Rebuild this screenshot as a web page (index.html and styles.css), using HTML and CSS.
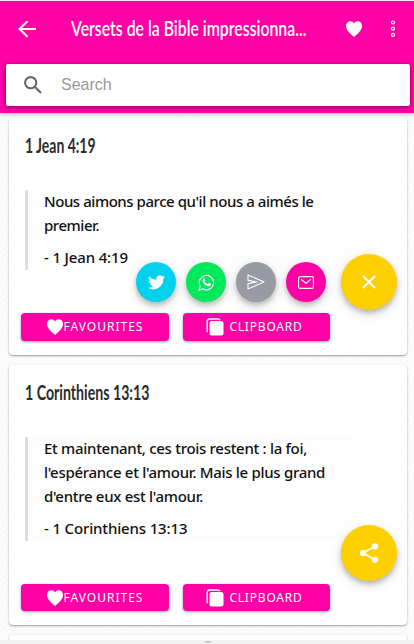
FILE: index.html
```html
<!DOCTYPE html>
<html lang="fr">
<head>
    <meta charset="UTF-8">
    <meta name="viewport" content="width=device-width, initial-scale=1.0">
    <title>Versets de la Bible</title>
    <link rel="stylesheet" href="styles.css">
</head>
<body>
    <!-- Shared icons -->
    <svg class="icon-defs" width="0" height="0">
        <symbol id="heart" viewBox="0 0 16 16">
            <path fill="currentColor" d="M8 16C6.8 14.8 4.2 13 2.3 10.6 .8 8.8 0 7 0 5 0 2.1 1.9.3 4.4.3 6 .3 7.3 1.1 8 2.5 8.7 1.1 10 .3 11.6.3 14.1.3 16 2.1 16 5c0 2-.8 3.800-2.300 5.600C11.800 13 9.200 14.800 8 16z"/>
        </symbol>
        <symbol id="copy" viewBox="0 0 18 18">
            <path fill="none" stroke="currentColor" stroke-width="1.500" d="M1.200 14.200V3.600Q1.200 1 3.800 1H11.500Q13.400 1 14 2.200"/>
            <rect fill="currentColor" x="3.500" y="3" width="14" height="14.500" rx="2.500"/>
        </symbol>
    </svg>

    <header>
        <div class="toolbar">
            <a href="#" class="back">
                <svg width="18" height="18" viewBox="0 0 18 18"><path fill="none" stroke="#fff" stroke-width="2" d="M18 9H2M9.500 1.200L1.500 9l8 7.800"/></svg>
            </a>
            <h1><span>Versets de la Bible impressionna...</span></h1>
            <a href="#" class="fav"><svg width="16" height="16"><use href="#heart"/></svg></a>
            <a href="#" class="more">
                <svg width="6" height="18" viewBox="0 0 6 18"><g fill="none" stroke="#fff" stroke-width="1.200"><circle cx="3" cy="2.500" r="1.500"/><circle cx="3" cy="8.700" r="1.500"/><circle cx="3" cy="14.900" r="1.500"/></g></svg>
            </a>
        </div>
        <div class="search-bar">
            <svg width="18" height="18" viewBox="0 0 18 18"><g fill="none" stroke="#666" stroke-width="2.100"><circle cx="6.700" cy="6.700" r="5.600"/><path d="M10.800 10.800L17 17"/></g></svg>
            <input type="text" placeholder="Search">
        </div>
    </header>

    <main>
        <section class="card">
            <h2><span>1 Jean 4:19</span></h2>
            <blockquote>
                <p>Nous aimons parce qu'il nous a aimés le<br>premier.</p>
                <cite>- 1 Jean 4:19</cite>
            </blockquote>
            <div class="buttons">
                <button><svg width="16" height="16"><use href="#heart"/></svg><span>FAVOURITES</span></button>
                <button class="clipboard"><svg width="18" height="18"><use href="#copy"/></svg><span>CLIPBOARD</span></button>
            </div>
            <div class="share">
                <a href="#" class="fab small twitter">
                    <svg width="17" height="15" viewBox="0 0 24 20"><path fill="#fff" d="M24 2.400a10 10 0 0 1-2.800.8A5 5 0 0 0 23.300.5a10 10 0 0 1-3.100 1.200 4.900 4.900 0 0 0-8.400 4.500A14 14 0 0 1 1.700 1a4.900 4.900 0 0 0 1.500 6.600A5 5 0 0 1 1 7a4.900 4.900 0 0 0 3.900 4.900 5 5 0 0 1-2.200.1 4.900 4.900 0 0 0 4.600 3.400A9.900 9.900 0 0 1 0 17.500 14 14 0 0 0 21.500 5.100 10 10 0 0 0 24 2.400z"/></svg>
                </a>
                <a href="#" class="fab small whatsapp">
                    <svg width="17" height="17" viewBox="0 0 17 17"><path fill="none" stroke="#fff" stroke-width="1.200" d="M1 16l1.100-4A7.200 7.200 0 1 1 5 14.900z"/><path fill="#fff" d="M5.600 4.300q.5-.4 1 0l.8 1.900q0 .5-.7 1.200 1 1.900 3 2.600l.9-1q.4-.2.8 0l1.700.9q.2.200 0 .8-.7 1.700-2.500 1.600Q6.400 11.800 4.700 7.800 4.100 5.500 5.600 4.300z"/></svg>
                </a>
                <a href="#" class="fab small send">
                    <svg width="18" height="16" viewBox="0 0 18 16"><path fill="none" stroke="#fff" stroke-width="1.100" stroke-linejoin="round" d="M1 1l16 7L1 15V9.600L10 8 1 6.400z"/></svg>
                </a>
                <a href="#" class="fab small mail">
                    <svg width="16" height="13" viewBox="0 0 16 13"><rect x=".6" y=".6" width="14.800" height="11.800" rx="1.500" fill="none" stroke="#fff" stroke-width="1.100"/><path fill="none" stroke="#fff" stroke-width="1.100" d="M3 3.200l5 4 5-4"/></svg>
                </a>
                <a href="#" class="fab main">
                    <svg width="14" height="14" viewBox="0 0 14 14"><path stroke="#fff" stroke-width="1.900" d="M1 1l12 12M13 1L1 13"/></svg>
                </a>
            </div>
        </section>

        <section class="card tall">
            <h2><span>1 Corinthiens 13:13</span></h2>
            <blockquote>
                <p>Et maintenant, ces trois restent : la foi,<br>l'espérance et l'amour. Mais le plus grand<br>d'entre eux est l'amour.</p>
                <cite>- 1 Corinthiens 13:13</cite>
            </blockquote>
            <div class="buttons">
                <button><svg width="16" height="16"><use href="#heart"/></svg><span>FAVOURITES</span></button>
                <button class="clipboard"><svg width="18" height="18"><use href="#copy"/></svg><span>CLIPBOARD</span></button>
            </div>
            <div class="share">
                <a href="#" class="fab main">
                    <svg width="20" height="20" viewBox="0 0 20 20"><path fill="none" stroke="#fff" stroke-width="1.600" d="M16 3.300L4 10l12 6.800"/><g fill="#fff"><circle cx="16" cy="3.300" r="3.100"/><circle cx="4" cy="10" r="3.100"/><circle cx="16" cy="16.800" r="3.100"/></g></svg>
                </a>
            </div>
        </section>

        <section class="card"></section>
    </main>

    <footer><span></span></footer>
</body>
</html>
```

FILE: styles.css
```css
* {
    box-sizing: border-box;
}

body {
    margin: 0;
    height: 644px;
    overflow: hidden;
    display: flex;
    flex-direction: column;
    font-family: "Noto Sans", sans-serif;
    background: repeating-linear-gradient(135deg, #fcfcfc 0, #fcfcfc 2px, #f9f9f9 2px, #f9f9f9 4px);
}

.icon-defs {
    display: none;
}

svg {
    display: block;
    flex: none;
}

/* Header */
header {
    flex: none;
    height: 113px;
    padding: 0 4px 0 6px;
    border-top: 1px solid #eee;
    background: #ff00a6;
    color: #fff;
    box-shadow: 0 1px 4px rgba(0, 0, 0, 0.3);
    z-index: 1;
}

.toolbar {
    display: flex;
    align-items: center;
    height: 56px;
    padding: 0 14px 0 12px;
}

.toolbar a {
    color: #fff;
}

.toolbar h1 {
    flex: none;
    width: 235px;
    margin: 0 0 3px 35px;
    font-family: Lato, sans-serif;
    font-size: 21px;
    font-weight: 600;
    line-height: 28px;
    white-space: nowrap;
}

.toolbar h1 span,
.card h2 span {
    display: inline-block;
    transform: scaleX(0.753);
    transform-origin: left;
}

.fav {
    margin-left: 40px;
}

.more {
    margin-left: auto;
}

.search-bar {
    display: flex;
    align-items: center;
    height: 42px;
    margin-top: 7px;
    padding-left: 18px;
    border-radius: 2px;
    background: #fff;
    box-shadow: 0 1px 4px rgba(0, 0, 0, 0.5);
}

.search-bar input {
    width: 300px;
    margin-left: 19px;
    padding: 0;
    border: none;
    font-family: "Liberation Sans", Arial, sans-serif;
    font-size: 16px;
}

.search-bar input::placeholder {
    color: #999;
}

/* Cards */
main {
    flex: 1;
    min-height: 0;
    overflow: hidden;
    padding: 5px 7px 0 9px;
    display: flex;
    flex-direction: column;
    gap: 10px;
}

.card {
    position: relative;
    flex: none;
    display: flex;
    flex-direction: column;
    height: 237px;
    padding: 13px 12px 14px;
    border-radius: 4px;
    background: #fff;
    box-shadow: 0 1px 2px rgba(0, 0, 0, 0.4);
}

.tall {
    height: 260px;
}

.card h2 {
    margin: 0 0 0 4px;
    height: 59px;
    font-family: Lato, sans-serif;
    font-size: 21px;
    font-weight: 700;
    line-height: 28px;
    color: #2b2b2b;
    white-space: nowrap;
}

.card h2 span {
    transform: scaleX(0.665);
}

.tall h2 span {
    transform: scaleX(0.675);
}

blockquote {
    display: flow-root;
    width: 326px;
    margin: 0 0 0 4px;
    padding: 0 0 1px 16px;
    border-left: 3px solid #ddd;
    background: #fdfdfd;
    font-size: 15px;
    font-weight: 500;
    line-height: 24px;
    color: #111;
    white-space: nowrap;
}

blockquote p {
    margin: -1px 0 8px;
    letter-spacing: -0.45px;
}

.tall p {
    letter-spacing: -0.3px;
}

cite {
    display: block;
    font-style: normal;
    letter-spacing: -0.15px;
}

.buttons {
    display: flex;
    gap: 14px;
    margin-top: auto;
}

.buttons button {
    display: flex;
    align-items: center;
    justify-content: center;
    gap: 1px;
    width: 148px;
    height: 28px;
    padding: 0;
    border: none;
    border-radius: 4px;
    background: #ff00a6;
    color: #fff;
    font-family: "Noto Sans", sans-serif;
    font-size: 12px;
    letter-spacing: 1px;
    box-shadow: 0 1px 3px rgba(0, 0, 0, 0.4);
}

.buttons span {
    padding-bottom: 1px;
}

.buttons .clipboard {
    width: 147px;
    gap: 5px;
    padding-right: 4px;
    letter-spacing: 0.8px;
}

.tall .buttons button {
    height: 27px;
}

/* Share buttons, floating over the card */
.share {
    position: absolute;
    right: 10px;
    bottom: 45px;
    display: flex;
    align-items: center;
    gap: 10px;
}

.tall .share {
    bottom: 44px;
}

.fab {
    display: flex;
    align-items: center;
    justify-content: center;
    border-radius: 50%;
    box-shadow: 0 3px 5px rgba(0, 0, 0, 0.2), 0 4px 12px rgba(0, 0, 0, 0.14);
}

.small {
    width: 40px;
    height: 40px;
}

.main {
    width: 56px;
    height: 56px;
    background: #ffd000;
}

.small + .main {
    margin-left: 5px;
}

.twitter {
    background: #00d2ee;
}

.whatsapp {
    background: #00e85c;
}

.send {
    background: #989aa4;
}

.mail {
    background: #ff00a6;
}

/* Bottom strip */
footer {
    flex: none;
    height: 4px;
    display: flex;
    justify-content: center;
    align-items: center;
    padding-left: 2px;
    background: #f1f1f1;
    z-index: 1;
}

footer span {
    width: 6px;
    height: 2px;
    background: #ccc;
}
```
